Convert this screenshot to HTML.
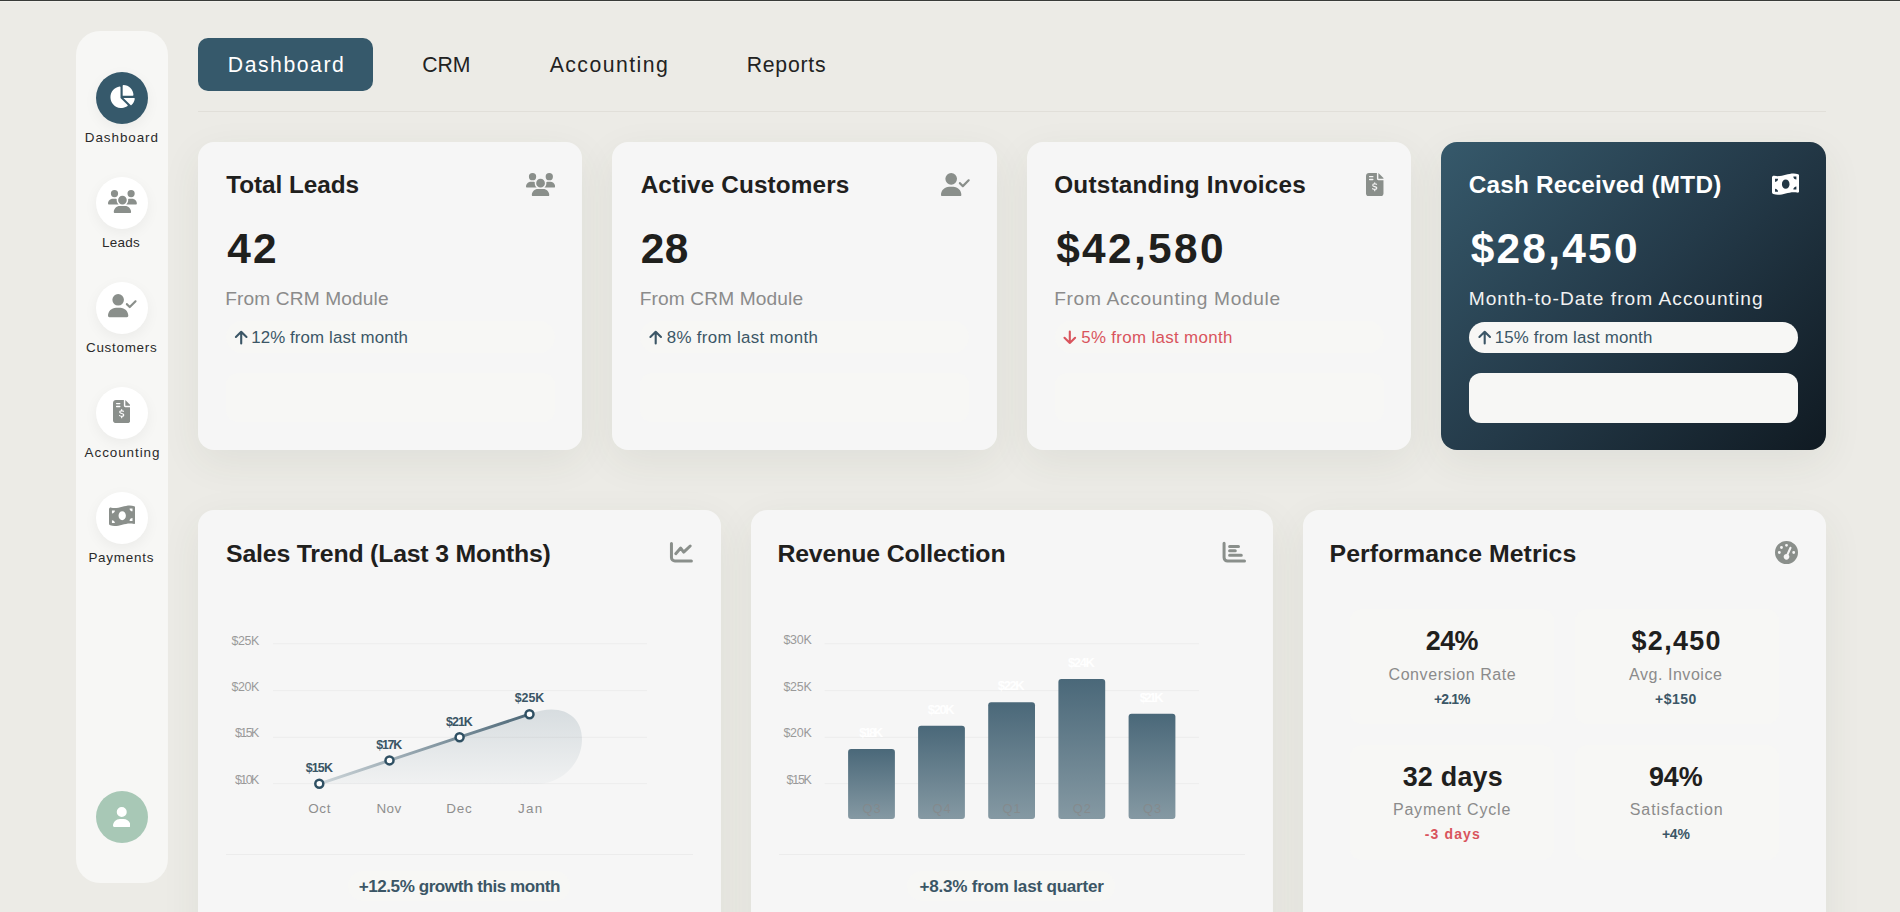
<!DOCTYPE html><html><head><meta charset="utf-8"><style>
*{margin:0;padding:0;box-sizing:border-box}
html,body{width:1900px;height:912px;overflow:hidden}
body{background:#ecebe6;font-family:"Liberation Sans",sans-serif;position:relative}
.a{position:absolute}
.t{position:absolute;white-space:nowrap;font-family:"Liberation Sans",sans-serif}
.card{position:absolute;background:#f6f6f6;border-radius:16px;box-shadow:0 12px 40px rgba(50,65,45,0.07)}
.circ{position:absolute;width:52px;height:52px;border-radius:50%;background:#fff;box-shadow:0 4px 14px rgba(0,0,0,0.05)}
</style></head><body>
<div class="a" style="left:0;top:0;width:1900px;height:1px;background:#393b39"></div>
<div class="a" style="left:0;top:1px;width:1900px;height:1px;background:#f2f1ed"></div>
<div class="a" style="left:76px;top:31px;width:92px;height:852px;border-radius:24px;background:#f7f7f5"></div>
<div class="circ" style="left:96px;top:71.5px;background:#36596b"></div>
<div class="circ" style="left:96px;top:176.5px;background:#ffffff"></div>
<div class="circ" style="left:96px;top:281.5px;background:#ffffff"></div>
<div class="circ" style="left:96px;top:386.5px;background:#ffffff"></div>
<div class="circ" style="left:96px;top:491.5px;background:#ffffff"></div>
<div class="circ" style="left:96px;top:791px;background:#a8c8b6;box-shadow:none"></div>
<div class="a" style="left:198px;top:38px;width:175px;height:53px;border-radius:10px;background:#36596b"></div>
<div class="a" style="left:198px;top:111px;width:1628px;height:1px;background:#e1dfd9"></div>
<div class="card" style="left:198px;top:142px;width:384px;height:308px"></div>
<div class="a" style="left:226px;top:321px;width:329px;height:32px;border-radius:16px;background:#f7f7f5"></div>
<div class="a" style="left:226px;top:373px;width:329px;height:49px;border-radius:12px;background:#f7f7f5"></div>
<div class="card" style="left:612px;top:142px;width:384.5px;height:308px"></div>
<div class="a" style="left:640px;top:321px;width:329px;height:32px;border-radius:16px;background:#f7f7f5"></div>
<div class="a" style="left:640px;top:373px;width:329px;height:49px;border-radius:12px;background:#f7f7f5"></div>
<div class="card" style="left:1026.8px;top:142px;width:384.2px;height:308px"></div>
<div class="a" style="left:1054.8px;top:321px;width:329px;height:32px;border-radius:16px;background:#f7f7f5"></div>
<div class="a" style="left:1054.8px;top:373px;width:329px;height:49px;border-radius:12px;background:#f7f7f5"></div>
<div class="card" style="left:1441px;top:142px;width:385px;height:308px;background:linear-gradient(135deg,#36596b 0%,#243a49 50%,#101a22 100%);box-shadow:0 12px 40px rgba(50,65,45,0.07)"></div>
<div class="a" style="left:1469px;top:322px;width:329px;height:31px;border-radius:16px;background:#f7f7f5"></div>
<div class="a" style="left:1469px;top:373px;width:329px;height:50px;border-radius:12px;background:#f7f7f5"></div>
<div class="card" style="left:198px;top:510px;width:522.67px;height:460px"></div>
<div class="card" style="left:750.67px;top:510px;width:522.67px;height:460px"></div>
<div class="card" style="left:1303.33px;top:510px;width:522.67px;height:460px"></div>
<div class="a" style="left:226px;top:854px;width:466.67px;height:1px;background:#ececec"></div>
<div class="a" style="left:778.67px;top:854px;width:466.67px;height:1px;background:#ececec"></div>
<div class="a" style="left:348px;top:871px;width:222px;height:30px;border-radius:15px;background:#f7f7f5"></div>
<div class="a" style="left:907px;top:871px;width:208px;height:30px;border-radius:15px;background:#f7f7f5"></div>
<div class="a" style="left:1350px;top:609px;width:204px;height:115px;border-radius:12px;background:#f7f7f5"></div>
<div class="a" style="left:1575px;top:609px;width:204px;height:115px;border-radius:12px;background:#f7f7f5"></div>
<div class="a" style="left:1350px;top:745px;width:204px;height:115px;border-radius:12px;background:#f7f7f5"></div>
<div class="a" style="left:1575px;top:745px;width:204px;height:115px;border-radius:12px;background:#f7f7f5"></div>
<svg class="a" style="left:0;top:0" width="1900" height="912" viewBox="0 0 1900 912"><line x1="273" y1="643.7" x2="647" y2="643.7" stroke="#ededed" stroke-width="1"/><line x1="824.6" y1="643.7" x2="1199" y2="643.7" stroke="#ededed" stroke-width="1"/><line x1="273" y1="690.6" x2="647" y2="690.6" stroke="#ededed" stroke-width="1"/><line x1="824.6" y1="690.6" x2="1199" y2="690.6" stroke="#ededed" stroke-width="1"/><line x1="273" y1="737.3" x2="647" y2="737.3" stroke="#ededed" stroke-width="1"/><line x1="824.6" y1="737.3" x2="1199" y2="737.3" stroke="#ededed" stroke-width="1"/><line x1="273" y1="783.6" x2="647" y2="783.6" stroke="#ededed" stroke-width="1"/><line x1="824.6" y1="783.6" x2="1199" y2="783.6" stroke="#ededed" stroke-width="1"/><defs>
<linearGradient id="lg" x1="0" y1="0" x2="1" y2="0"><stop offset="0" stop-color="#cdd5d9"/><stop offset="1" stop-color="#4d6878"/></linearGradient>
<linearGradient id="ag" x1="0" y1="0" x2="0" y2="1"><stop offset="0" stop-color="#36596b" stop-opacity="0.16"/><stop offset="1" stop-color="#36596b" stop-opacity="0.03"/></linearGradient>
<linearGradient id="bg" x1="0" y1="0" x2="0" y2="1"><stop offset="0" stop-color="#4a6879"/><stop offset="1" stop-color="#8599a3"/></linearGradient>
</defs><path d="M319.3 783.8 L529.5 714.2 C560 702 582 715 582 739 C582 765 560 784 537 784 Z" fill="url(#ag)"/><path d="M319.3 783.8 L389.5 760.4 L459.6 737.2 L529.5 714.2" fill="none" stroke="url(#lg)" stroke-width="3"/><circle cx="319.3" cy="783.8" r="4" fill="#fff" stroke="#2f5063" stroke-width="2.5"/><circle cx="389.5" cy="760.4" r="4" fill="#fff" stroke="#2f5063" stroke-width="2.5"/><circle cx="459.6" cy="737.2" r="4" fill="#fff" stroke="#2f5063" stroke-width="2.5"/><circle cx="529.5" cy="714.2" r="4" fill="#fff" stroke="#2f5063" stroke-width="2.5"/><rect x="848.1" y="749.1" width="46.8" height="69.89999999999998" rx="3" fill="url(#bg)"/><rect x="918.1" y="725.7" width="46.8" height="93.29999999999995" rx="3" fill="url(#bg)"/><rect x="988.2" y="702.3" width="46.8" height="116.70000000000005" rx="3" fill="url(#bg)"/><rect x="1058.4" y="679" width="46.8" height="140" rx="3" fill="url(#bg)"/><rect x="1128.6" y="713.8" width="46.8" height="105.20000000000005" rx="3" fill="url(#bg)"/></svg>
<svg class="a" style="left:108.66px;top:85.06px" width="25.92" height="23.04" viewBox="0 0 576 512"><path d="M304 240V16.6c0-9 7-16.6 16-16.6C443.7 0 544 100.3 544 224c0 9-7.6 16-16.6 16H304zM32 272C32 150.7 122.1 50.3 239 34.3c9.2-1.3 17 6.1 17 15.4V288L412.5 444.5c6.7 6.7 6.2 17.7-1.5 23.1C371.8 495.6 323.8 512 272 512C139.5 512 32 404.6 32 272zm526.4 16c9.3 0 16.6 7.8 15.4 17c-7.7 55.9-34.6 105.6-73.9 142.3c-6 5.6-15.4 5.2-21.2-.7L320 288H558.4z" fill="#ffffff"/></svg>
<svg class="a" style="left:107.90px;top:189.90px" width="28.88" height="23.10" viewBox="0 0 640 512"><path d="M144 0a80 80 0 1 1 0 160A80 80 0 1 1 144 0zM512 0a80 80 0 1 1 0 160A80 80 0 1 1 512 0zM0 298.7C0 239.8 47.8 192 106.7 192h42.7c15.9 0 31 3.5 44.6 9.7c-1.3 7.2-1.9 14.7-1.9 22.3c0 38.2 16.8 72.5 43.3 96c-.2 0-.4 0-.7 0H21.3C9.6 320 0 310.4 0 298.7zM405.3 320c-.2 0-.4 0-.7 0c26.6-23.5 43.3-57.8 43.3-96c0-7.6-.7-15-1.9-22.3c13.6-6.3 28.7-9.7 44.6-9.7h42.7C592.2 192 640 239.8 640 298.7c0 11.8-9.6 21.3-21.3 21.3H405.3zM224 224a96 96 0 1 1 192 0 96 96 0 1 1 -192 0zM128 485.3C128 411.7 187.7 352 261.3 352H378.7C452.3 352 512 411.7 512 485.3c0 14.7-11.9 26.7-26.7 26.7H154.7c-14.7 0-26.7-11.9-26.7-26.7z" fill="#8a8f8b"/></svg>
<svg class="a" style="left:107.55px;top:294.40px" width="29.00" height="23.20" viewBox="0 0 640 512"><path d="M96 128a128 128 0 1 1 256 0A128 128 0 1 1 96 128zM0 482.3C0 383.8 79.8 304 178.3 304h91.4C368.2 304 448 383.8 448 482.3c0 16.4-13.3 29.7-29.7 29.7H29.7C13.3 512 0 498.7 0 482.3zM625 177L497 305c-9.4 9.4-24.6 9.4-33.9 0l-64-64c-9.4-9.4-9.4-24.6 0-33.9s24.6-9.4 33.9 0l47 47L591 143c9.4-9.4 24.6-9.4 33.9 0s9.4 24.6 0 33.9z" fill="#8a8f8b"/></svg>
<svg class="a" style="left:113.10px;top:399.80px" width="17.40" height="23.20" viewBox="0 0 384 512"><path d="M48 0H240V128c0 17.7 14.3 32 32 32H384V448c0 35.3-28.7 64-64 64H64C28.7 512 0 483.3 0 448V64C0 28.7 28.7 0 64 0z" fill="#8a8f8b"/><path d="M272 0L384 112V128H272z" fill="#8a8f8b"/><path d="M80 80H150M80 144H150" stroke="#ffffff" stroke-width="30" stroke-linecap="round" fill="none"/><path d="M232 248c-14-8-30-12-46-11c-22 1-38 13-38 30c0 38 90 26 90 64c0 18-18 30-42 30c-18 0-36-6-52-16M192 214V240M192 362V390" stroke="#ffffff" stroke-width="26" stroke-linecap="round" fill="none"/></svg>
<svg class="a" style="left:109.00px;top:504.30px" width="26.44" height="23.50" viewBox="0 0 576 512"><path d="M0 112.5V422.3c0 18 10.1 35 27 41.3c87 32.5 174 10.3 261-11.9c79.8-20.3 159.6-40.7 239.3-18.9c23 6.3 48.7-9.5 48.7-33.4V89.7c0-18-10.1-35-27-41.3C462 15.9 375 38.1 288 60.3C208.2 80.6 128.4 100.9 48.7 79.1C25.6 72.8 0 88.6 0 112.5zM288 352c-44.2 0-80-43-80-96s35.8-96 80-96s80 43 80 96s-35.8 96-80 96zM64 352c35.3 0 64 28.7 64 64H64V352zm64-208c0 35.3-28.7 64-64 64V144h64zM512 304v64H448c0-35.3 28.7-64 64-64zM448 96h64v64c-35.3 0-64-28.7-64-64z" fill="#8a8f8b"/></svg>
<svg class="a" style="left:112.90px;top:806.60px" width="17.50" height="20.00" viewBox="0 0 448 512"><path d="M224 256A128 128 0 1 0 224 0a128 128 0 1 0 0 256zm-45.7 48C79.8 304 0 383.8 0 482.3C0 498.7 13.3 512 29.7 512H418.3c16.4 0 29.7-13.3 29.7-29.7C448 383.8 368.2 304 269.7 304H178.3z" fill="#ffffff"/></svg>
<svg class="a" style="left:526.20px;top:172.60px" width="29.12" height="23.30" viewBox="0 0 640 512"><path d="M144 0a80 80 0 1 1 0 160A80 80 0 1 1 144 0zM512 0a80 80 0 1 1 0 160A80 80 0 1 1 512 0zM0 298.7C0 239.8 47.8 192 106.7 192h42.7c15.9 0 31 3.5 44.6 9.7c-1.3 7.2-1.9 14.7-1.9 22.3c0 38.2 16.8 72.5 43.3 96c-.2 0-.4 0-.7 0H21.3C9.6 320 0 310.4 0 298.7zM405.3 320c-.2 0-.4 0-.7 0c26.6-23.5 43.3-57.8 43.3-96c0-7.6-.7-15-1.9-22.3c13.6-6.3 28.7-9.7 44.6-9.7h42.7C592.2 192 640 239.8 640 298.7c0 11.8-9.6 21.3-21.3 21.3H405.3zM224 224a96 96 0 1 1 192 0 96 96 0 1 1 -192 0zM128 485.3C128 411.7 187.7 352 261.3 352H378.7C452.3 352 512 411.7 512 485.3c0 14.7-11.9 26.7-26.7 26.7H154.7c-14.7 0-26.7-11.9-26.7-26.7z" fill="#8a8f8b"/></svg>
<svg class="a" style="left:941.00px;top:172.60px" width="29.12" height="23.30" viewBox="0 0 640 512"><path d="M96 128a128 128 0 1 1 256 0A128 128 0 1 1 96 128zM0 482.3C0 383.8 79.8 304 178.3 304h91.4C368.2 304 448 383.8 448 482.3c0 16.4-13.3 29.7-29.7 29.7H29.7C13.3 512 0 498.7 0 482.3zM625 177L497 305c-9.4 9.4-24.6 9.4-33.9 0l-64-64c-9.4-9.4-9.4-24.6 0-33.9s24.6-9.4 33.9 0l47 47L591 143c9.4-9.4 24.6-9.4 33.9 0s9.4 24.6 0 33.9z" fill="#8a8f8b"/></svg>
<svg class="a" style="left:1366.20px;top:172.60px" width="17.48" height="23.30" viewBox="0 0 384 512"><path d="M48 0H240V128c0 17.7 14.3 32 32 32H384V448c0 35.3-28.7 64-64 64H64C28.7 512 0 483.3 0 448V64C0 28.7 28.7 0 64 0z" fill="#8a8f8b"/><path d="M272 0L384 112V128H272z" fill="#8a8f8b"/><path d="M80 80H150M80 144H150" stroke="#f5f5f5" stroke-width="30" stroke-linecap="round" fill="none"/><path d="M232 248c-14-8-30-12-46-11c-22 1-38 13-38 30c0 38 90 26 90 64c0 18-18 30-42 30c-18 0-36-6-52-16M192 214V240M192 362V390" stroke="#f5f5f5" stroke-width="26" stroke-linecap="round" fill="none"/></svg>
<svg class="a" style="left:1772.00px;top:172.20px" width="27.45" height="24.40" viewBox="0 0 576 512"><path d="M0 112.5V422.3c0 18 10.1 35 27 41.3c87 32.5 174 10.3 261-11.9c79.8-20.3 159.6-40.7 239.3-18.9c23 6.3 48.7-9.5 48.7-33.4V89.7c0-18-10.1-35-27-41.3C462 15.9 375 38.1 288 60.3C208.2 80.6 128.4 100.9 48.7 79.1C25.6 72.8 0 88.6 0 112.5zM288 352c-44.2 0-80-43-80-96s35.8-96 80-96s80 43 80 96s-35.8 96-80 96zM64 352c35.3 0 64 28.7 64 64H64V352zm64-208c0 35.3-28.7 64-64 64V144h64zM512 304v64H448c0-35.3 28.7-64 64-64zM448 96h64v64c-35.3 0-64-28.7-64-64z" fill="#ffffff"/></svg>
<svg class="a" style="left:1775.15px;top:540.70px" width="23.00" height="23.00" viewBox="0 0 512 512"><path d="M0 256a256 256 0 1 1 512 0A256 256 0 1 1 0 256zM288 96a32 32 0 1 0 -64 0 32 32 0 1 0 64 0zM256 416c35.3 0 64-28.7 64-64c0-17.4-6.9-33.1-18.1-44.6L366 161.7c5.3-12.1-.2-26.3-12.3-31.6s-26.3 .2-31.6 12.3L257.9 288c-.6 0-1.3 0-1.9 0c-35.3 0-64 28.7-64 64s28.7 64 64 64zM176 144a32 32 0 1 0 -64 0 32 32 0 1 0 64 0zM96 288a32 32 0 1 0 0-64 32 32 0 1 0 0 64zm352-32a32 32 0 1 0 -64 0 32 32 0 1 0 64 0z" fill="#8a8f8b"/></svg>
<svg class="a" style="left:0;top:0" width="1900" height="912"><g fill="none" stroke="#8a8f8b" stroke-width="3" stroke-linecap="round" stroke-linejoin="round"><path d="M1224.07 543.3V557.6a3.5 3.5 0 0 0 3.5 3.5H1244.5"/><path d="M1229.6 546.5H1238.5M1229.6 550.7H1235.3M1229.6 555.2H1241.3"/><path d="M671.45 543.5V557.4a3.5 3.5 0 0 0 3.5 3.5H691.4"/><path d="M675.75 553.7L680.7 548.1L683.7 552.1L690.2 546"/></g></svg>
<svg class="a" style="left:0;top:0" width="1900" height="912"><g stroke="#3b5666" stroke-width="2.1" fill="none" stroke-linecap="round" stroke-linejoin="round"><path d="M241.2 332V343.5M235.89999999999998 337L241.2 331.8L246.5 337"/></g><g stroke="#3b5666" stroke-width="2.1" fill="none" stroke-linecap="round" stroke-linejoin="round"><path d="M655.7 332V343.5M650.4000000000001 337L655.7 331.8L661.0 337"/></g><g stroke="#d9545c" stroke-width="2.1" fill="none" stroke-linecap="round" stroke-linejoin="round"><path d="M1069.8 331.5V343M1064.5 337.8L1069.8 343L1075.1 337.8"/></g><g stroke="#3b5666" stroke-width="2.1" fill="none" stroke-linecap="round" stroke-linejoin="round"><path d="M1484.7 332V343.5M1479.4 337L1484.7 331.8L1490.0 337"/></g></svg>
<div class="t" style="left:227.80px;top:54.30px;font-size:21.22px;font-weight:400;color:#ffffff;letter-spacing:1.525px;line-height:21.22px">Dashboard</div>
<div class="t" style="left:422.20px;top:54.30px;font-size:21.22px;font-weight:400;color:#222222;letter-spacing:-0.074px;line-height:21.22px">CRM</div>
<div class="t" style="left:549.70px;top:54.30px;font-size:21.22px;font-weight:400;color:#222222;letter-spacing:1.457px;line-height:21.22px">Accounting</div>
<div class="t" style="left:746.70px;top:54.30px;font-size:21.22px;font-weight:400;color:#222222;letter-spacing:0.769px;line-height:21.22px">Reports</div>
<div class="t" style="left:84.80px;top:131.30px;font-size:13.45px;font-weight:400;color:#2a2a2a;letter-spacing:0.929px;line-height:13.45px">Dashboard</div>
<div class="t" style="left:102.00px;top:236.30px;font-size:13.45px;font-weight:400;color:#2a2a2a;letter-spacing:0.302px;line-height:13.45px">Leads</div>
<div class="t" style="left:86.00px;top:341.00px;font-size:13.45px;font-weight:400;color:#2a2a2a;letter-spacing:0.707px;line-height:13.45px">Customers</div>
<div class="t" style="left:84.60px;top:446.30px;font-size:13.45px;font-weight:400;color:#2a2a2a;letter-spacing:0.932px;line-height:13.45px">Accounting</div>
<div class="t" style="left:88.40px;top:551.30px;font-size:13.45px;font-weight:400;color:#2a2a2a;letter-spacing:0.753px;line-height:13.45px">Payments</div>
<div class="t" style="left:226.20px;top:173.40px;font-size:24.32px;font-weight:700;color:#1f201d;letter-spacing:-0.047px;line-height:24.32px">Total Leads</div>
<div class="t" style="left:227.20px;top:227.60px;font-size:42.43px;font-weight:700;color:#1f201d;letter-spacing:2.107px;line-height:42.43px">42</div>
<div class="t" style="left:225.20px;top:289.40px;font-size:19.15px;font-weight:400;color:#8b8b8b;letter-spacing:0.128px;line-height:19.15px">From CRM Module</div>
<div class="t" style="left:251.20px;top:330.30px;font-size:16.87px;font-weight:400;color:#3b5666;letter-spacing:0.115px;line-height:16.87px">12% from last month</div>
<div class="t" style="left:640.70px;top:173.40px;font-size:24.32px;font-weight:700;color:#1f201d;letter-spacing:0.126px;line-height:24.32px">Active Customers</div>
<div class="t" style="left:640.70px;top:227.60px;font-size:42.43px;font-weight:700;color:#1f201d;letter-spacing:0.407px;line-height:42.43px">28</div>
<div class="t" style="left:639.70px;top:289.40px;font-size:19.15px;font-weight:400;color:#8b8b8b;letter-spacing:0.128px;line-height:19.15px">From CRM Module</div>
<div class="t" style="left:666.70px;top:330.30px;font-size:16.87px;font-weight:400;color:#3b5666;letter-spacing:0.350px;line-height:16.87px">8% from last month</div>
<div class="t" style="left:1054.20px;top:173.40px;font-size:24.32px;font-weight:700;color:#1f201d;letter-spacing:0.227px;line-height:24.32px">Outstanding Invoices</div>
<div class="t" style="left:1056.20px;top:227.60px;font-size:42.43px;font-weight:700;color:#1f201d;letter-spacing:2.341px;line-height:42.43px">$42,580</div>
<div class="t" style="left:1054.20px;top:289.40px;font-size:19.15px;font-weight:400;color:#8b8b8b;letter-spacing:0.680px;line-height:19.15px">From Accounting Module</div>
<div class="t" style="left:1081.20px;top:330.30px;font-size:16.87px;font-weight:400;color:#d9545c;letter-spacing:0.350px;line-height:16.87px">5% from last month</div>
<div class="t" style="left:1468.70px;top:173.40px;font-size:24.32px;font-weight:700;color:#ffffff;letter-spacing:0.223px;line-height:24.32px">Cash Received (MTD)</div>
<div class="t" style="left:1470.70px;top:227.60px;font-size:42.43px;font-weight:700;color:#ffffff;letter-spacing:2.241px;line-height:42.43px">$28,450</div>
<div class="t" style="left:1468.70px;top:289.40px;font-size:19.15px;font-weight:400;color:#f2f2f2;letter-spacing:1.035px;line-height:19.15px">Month-to-Date from Accounting</div>
<div class="t" style="left:1494.70px;top:330.30px;font-size:16.87px;font-weight:400;color:#3b5666;letter-spacing:0.170px;line-height:16.87px">15% from last month</div>
<div class="t" style="left:226.10px;top:541.50px;font-size:24.84px;font-weight:700;color:#1f201d;letter-spacing:-0.191px;line-height:24.84px">Sales Trend (Last 3 Months)</div>
<div class="t" style="left:777.40px;top:541.50px;font-size:24.84px;font-weight:700;color:#1f201d;letter-spacing:-0.131px;line-height:24.84px">Revenue Collection</div>
<div class="t" style="left:1329.60px;top:541.50px;font-size:24.84px;font-weight:700;color:#1f201d;letter-spacing:0.060px;line-height:24.84px">Performance Metrics</div>
<div class="t" style="left:231.60px;top:634.60px;font-size:12.42px;font-weight:400;color:#9a9a9a;letter-spacing:-0.400px;line-height:12.42px">$25K</div>
<div class="t" style="left:231.60px;top:681.30px;font-size:12.42px;font-weight:400;color:#9a9a9a;letter-spacing:-0.400px;line-height:12.42px">$20K</div>
<div class="t" style="left:234.90px;top:727.30px;font-size:12.42px;font-weight:400;color:#9a9a9a;letter-spacing:-1.500px;line-height:12.42px">$15K</div>
<div class="t" style="left:234.90px;top:774.00px;font-size:12.42px;font-weight:400;color:#9a9a9a;letter-spacing:-1.500px;line-height:12.42px">$10K</div>
<div class="t" style="left:783.40px;top:634.40px;font-size:12.42px;font-weight:400;color:#9a9a9a;letter-spacing:-0.166px;line-height:12.42px">$30K</div>
<div class="t" style="left:783.40px;top:681.10px;font-size:12.42px;font-weight:400;color:#9a9a9a;letter-spacing:-0.166px;line-height:12.42px">$25K</div>
<div class="t" style="left:783.40px;top:727.40px;font-size:12.42px;font-weight:400;color:#9a9a9a;letter-spacing:-0.166px;line-height:12.42px">$20K</div>
<div class="t" style="left:786.60px;top:774.00px;font-size:12.42px;font-weight:400;color:#9a9a9a;letter-spacing:-1.233px;line-height:12.42px">$15K</div>
<div class="t" style="left:308.30px;top:802.00px;font-size:13.45px;font-weight:400;color:#8e8e8e;letter-spacing:0.615px;line-height:13.45px">Oct</div>
<div class="t" style="left:376.40px;top:802.00px;font-size:13.45px;font-weight:400;color:#8e8e8e;letter-spacing:0.461px;line-height:13.45px">Nov</div>
<div class="t" style="left:446.30px;top:802.00px;font-size:13.45px;font-weight:400;color:#8e8e8e;letter-spacing:0.711px;line-height:13.45px">Dec</div>
<div class="t" style="left:518.00px;top:802.00px;font-size:13.45px;font-weight:400;color:#8e8e8e;letter-spacing:1.304px;line-height:13.45px">Jan</div>
<div class="t" style="left:305.70px;top:761.80px;font-size:12.42px;font-weight:700;color:#3a5565;letter-spacing:-0.833px;line-height:12.42px">$15K</div>
<div class="t" style="left:376.30px;top:739.00px;font-size:12.42px;font-weight:700;color:#3a5565;letter-spacing:-1.266px;line-height:12.42px">$17K</div>
<div class="t" style="left:446.10px;top:716.00px;font-size:12.42px;font-weight:700;color:#3a5565;letter-spacing:-1.000px;line-height:12.42px">$21K</div>
<div class="t" style="left:514.70px;top:692.20px;font-size:12.42px;font-weight:700;color:#3a5565;letter-spacing:-0.033px;line-height:12.42px">$25K</div>
<div class="t" style="left:859.30px;top:727.40px;font-size:12.94px;font-weight:700;color:#ffffff;letter-spacing:-2.362px;line-height:12.94px">$18K</div>
<div class="t" style="left:862.55px;top:802.70px;font-size:12.94px;font-weight:400;color:rgba(135,135,135,0.75);letter-spacing:0.937px;line-height:12.94px">Q3</div>
<div class="t" style="left:927.80px;top:704.00px;font-size:12.94px;font-weight:700;color:#ffffff;letter-spacing:-1.362px;line-height:12.94px">$20K</div>
<div class="t" style="left:932.55px;top:802.70px;font-size:12.94px;font-weight:400;color:rgba(135,135,135,0.75);letter-spacing:0.937px;line-height:12.94px">Q4</div>
<div class="t" style="left:997.80px;top:680.40px;font-size:12.94px;font-weight:700;color:#ffffff;letter-spacing:-1.362px;line-height:12.94px">$22K</div>
<div class="t" style="left:1002.55px;top:802.70px;font-size:12.94px;font-weight:400;color:rgba(135,135,135,0.75);letter-spacing:0.937px;line-height:12.94px">Q1</div>
<div class="t" style="left:1068.00px;top:657.10px;font-size:12.94px;font-weight:700;color:#ffffff;letter-spacing:-1.362px;line-height:12.94px">$24K</div>
<div class="t" style="left:1072.75px;top:802.70px;font-size:12.94px;font-weight:400;color:rgba(135,135,135,0.75);letter-spacing:0.937px;line-height:12.94px">Q2</div>
<div class="t" style="left:1139.70px;top:692.00px;font-size:12.94px;font-weight:700;color:#ffffff;letter-spacing:-2.362px;line-height:12.94px">$21K</div>
<div class="t" style="left:1142.95px;top:802.70px;font-size:12.94px;font-weight:400;color:rgba(135,135,135,0.75);letter-spacing:0.937px;line-height:12.94px">Q3</div>
<div class="t" style="left:358.70px;top:878.00px;font-size:17.08px;font-weight:700;color:#3b5666;letter-spacing:-0.450px;line-height:17.08px">+12.5% growth this month</div>
<div class="t" style="left:919.40px;top:878.00px;font-size:17.08px;font-weight:700;color:#3b5666;letter-spacing:-0.218px;line-height:17.08px">+8.3% from last quarter</div>
<div class="t" style="left:1425.80px;top:628.40px;font-size:26.91px;font-weight:700;color:#1f201d;letter-spacing:-0.614px;line-height:26.91px">24%</div>
<div class="t" style="left:1388.50px;top:666.30px;font-size:16.04px;font-weight:400;color:#8b8b8b;letter-spacing:0.558px;line-height:16.04px">Conversion Rate</div>
<div class="t" style="left:1434.00px;top:693.00px;font-size:13.97px;font-weight:700;color:#3b5666;letter-spacing:-0.894px;line-height:13.97px">+2.1%</div>
<div class="t" style="left:1631.50px;top:628.40px;font-size:26.91px;font-weight:700;color:#1f201d;letter-spacing:1.354px;line-height:26.91px">$2,450</div>
<div class="t" style="left:1629.00px;top:666.30px;font-size:16.04px;font-weight:400;color:#8b8b8b;letter-spacing:0.534px;line-height:16.04px">Avg. Invoice</div>
<div class="t" style="left:1655.00px;top:693.00px;font-size:13.97px;font-weight:700;color:#3b5666;letter-spacing:0.534px;line-height:13.97px">+$150</div>
<div class="t" style="left:1402.70px;top:763.70px;font-size:26.91px;font-weight:700;color:#1f201d;letter-spacing:0.222px;line-height:26.91px">32 days</div>
<div class="t" style="left:1392.90px;top:801.00px;font-size:16.04px;font-weight:400;color:#8b8b8b;letter-spacing:0.801px;line-height:16.04px">Payment Cycle</div>
<div class="t" style="left:1424.80px;top:827.80px;font-size:13.97px;font-weight:700;color:#d9545c;letter-spacing:1.138px;line-height:13.97px">-3 days</div>
<div class="t" style="left:1649.00px;top:763.70px;font-size:26.91px;font-weight:700;color:#1f201d;letter-spacing:-0.114px;line-height:26.91px">94%</div>
<div class="t" style="left:1629.70px;top:801.00px;font-size:16.04px;font-weight:400;color:#8b8b8b;letter-spacing:0.922px;line-height:16.04px">Satisfaction</div>
<div class="t" style="left:1661.90px;top:827.80px;font-size:13.97px;font-weight:700;color:#3b5666;letter-spacing:-0.213px;line-height:13.97px">+4%</div>
</body></html>
